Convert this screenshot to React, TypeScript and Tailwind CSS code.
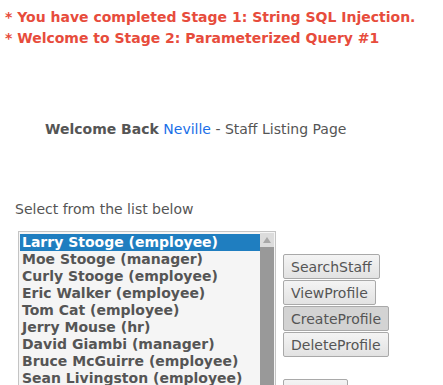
const staff = [
  "Larry Stooge (employee)",
  "Moe Stooge (manager)",
  "Curly Stooge (employee)",
  "Eric Walker (employee)",
  "Tom Cat (employee)",
  "Jerry Mouse (hr)",
  "David Giambi (manager)",
  "Bruce McGuirre (employee)",
  "Sean Livingston (employee)",
];

const actions = ["SearchStaff", "ViewProfile", "CreateProfile", "DeleteProfile"];

function Btn({ label, active }: { label: string; active?: boolean }) {
  return (
    <button
      className={
        "h-[25px] px-[7px] rounded-[2px] border border-[#a9a9a9] text-[14px] leading-none text-[#555] text-left " +
        (active
          ? "bg-[#d3d3d3]"
          : "bg-gradient-to-b from-[#f4f4f4] to-[#e2e2e2]")
      }
    >
      {label}
    </button>
  );
}

export default function App() {
  return (
    <div className="w-[443px] h-[385px] overflow-hidden bg-white font-['DejaVu_Sans',sans-serif] text-[#555]">
      <div className="pt-[7px] pl-[5px] text-[14px] font-bold leading-[21px] text-[#e74c3c]">
        <div>* You have completed Stage 1: String SQL Injection.</div>
        <div>* Welcome to Stage 2: Parameterized Query #1</div>
      </div>

      <div className="mt-[70px] pl-[45px] text-[14px] leading-[20px]">
        <span className="font-bold">Welcome Back</span>{" "}
        <span className="text-[#1a6fe8]">Neville</span> - Staff Listing Page
      </div>

      <div className="mt-[60px] pl-[15px] text-[14px] leading-[20px]">
        Select from the list below
      </div>

      <div className="mt-[12px] pl-[18px] flex items-start gap-[7px]">
        <div className="w-[258px] h-[170px] border border-[#c4c4c4] bg-[#f5f5f5] flex p-px">
          <div className="flex-1 pt-px">
            {staff.map((s, i) => (
              <div
                key={s}
                className={
                  "h-[17px] px-[2px] text-[14px] font-bold leading-[17px] whitespace-nowrap " +
                  (i === 0 ? "bg-[#1f7ec0] text-white" : "text-[#555]")
                }
              >
                {s}
              </div>
            ))}
          </div>
          <div className="w-[14px] bg-[#999] flex flex-col">
            <div className="h-[14px] bg-[#dcdcdc] flex items-center justify-center">
              <svg width="8" height="6" viewBox="0 0 8 6">
                <polygon points="4,0 8,6 0,6" fill="#a8a8a8" />
              </svg>
            </div>
          </div>
        </div>

        <div className="mt-[23px] flex flex-col items-start gap-px">
          {actions.map((a) => (
            <Btn key={a} label={a} active={a === "CreateProfile"} />
          ))}
          <div className="mt-[21px] w-[65px] h-[25px] rounded-[2px] border border-[#a9a9a9] bg-gradient-to-b from-[#f4f4f4] to-[#e2e2e2]" />
        </div>
      </div>
    </div>
  );
}
